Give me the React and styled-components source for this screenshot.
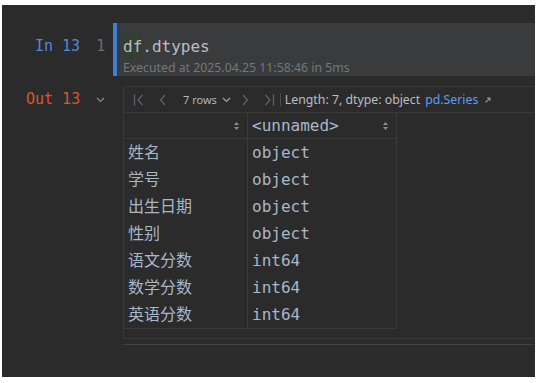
import React from 'react'
import styled, { createGlobalStyle } from 'styled-components'

const mono = `"DejaVu Sans Mono", "Noto Sans CJK SC", monospace`
const sans = `"Noto Sans", "Noto Sans CJK SC", sans-serif`

const rows = [
  ['姓名', 'object'],
  ['学号', 'object'],
  ['出生日期', 'object'],
  ['性别', 'object'],
  ['语文分数', 'int64'],
  ['数学分数', 'int64'],
  ['英语分数', 'int64'],
]

function SortIcon() {
  return (
    <svg width="7" height="10" viewBox="0 0 7 10">
      <path d="M3.5 1 L6 4 L1 4 Z" fill="#8a8d92" />
      <path d="M3.5 9 L6 6 L1 6 Z" fill="#8a8d92" />
    </svg>
  )
}

function NavIcon({ dir, edge }) {
  const flip = dir === 'right' ? 'scale(-1,1) translate(-12,0)' : undefined
  return (
    <svg width="12" height="12" viewBox="0 0 12 12">
      <g transform={flip} stroke="#5f6266" strokeWidth="1.3" fill="none">
        {edge && <path d="M1.5 0.5 V11.5" />}
        <path d={edge ? 'M9.5 1 L5 6 L9.5 11' : 'M8 1 L3.5 6 L8 11'} />
      </g>
    </svg>
  )
}

function Chevron({ color = '#8a8d92' }) {
  return (
    <svg width="9" height="6" viewBox="0 0 9 6">
      <path d="M1 1 L4.5 4.5 L8 1" stroke={color} strokeWidth="1.2" fill="none" />
    </svg>
  )
}

function OpenArrow() {
  return (
    <svg width="8" height="8" viewBox="0 0 8 8">
      <path d="M1.5 6.5 L6 2" stroke="#8a8d92" strokeWidth="1.3" />
      <path d="M2.5 1.5 H6.5 V5.5 Z" fill="#8a8d92" />
    </svg>
  )
}

function App() {
  return (
    <>
      <Global />
      <Page>
        <Frame>
          <CellRow>
            <Gutter>
              <PromptLabel color="#4f8ad9">In 13</PromptLabel>
              <LineNo>1</LineNo>
            </Gutter>
            <CodeBlock>
              <CodeLine>
                <Caret>df</Caret>.dtypes
              </CodeLine>
              <ExecInfo>Executed at 2025.04.25 11:58:46 in 5ms</ExecInfo>
            </CodeBlock>
          </CellRow>

          <OutRow>
            <OutGutter>
              <PromptLabel color="#d9562d">Out 13</PromptLabel>
              <Chevron />
            </OutGutter>
            <div>
              <Panel>
                <Toolbar>
                  <NavIcon edge />
                  <NavSpacer w={12} />
                  <NavIcon />
                  <NavSpacer w={14} />
                  <RowsPicker>
                    7 rows <Chevron color="#a0a3a8" />
                  </RowsPicker>
                  <NavSpacer w={8} />
                  <NavIcon dir="right" />
                  <NavSpacer w={12} />
                  <NavIcon dir="right" edge />
                  <Sep />
                  <Info>Length: 7, dtype: object</Info>
                  <TypeLink>pd.Series</TypeLink>
                  <OpenArrow />
                </Toolbar>
                <Table>
                  <HeadCell>
                    <SortIcon />
                  </HeadCell>
                  <HeadCell second>
                    <span>&lt;unnamed&gt;</span>
                    <SortIcon />
                  </HeadCell>
                  {rows.map(([name, type], i) => (
                    <React.Fragment key={name}>
                      <Cell last={i === rows.length - 1}>{name}</Cell>
                      <Cell second last={i === rows.length - 1}>{type}</Cell>
                    </React.Fragment>
                  ))}
                </Table>
              </Panel>
              <Divider />
            </div>
          </OutRow>
        </Frame>
      </Page>
    </>
  )
}

export default App

const Global = createGlobalStyle`
  body {
    margin: 0;
    background: #ffffff;
  }
`

const Page = styled.div`
  padding: 5px 6px 6px 2px;
`

const Frame = styled.div`
  height: 372px;
  background: #2b2b2b;
  padding-top: 18px;
  box-sizing: border-box;
  overflow: hidden;
`

const CellRow = styled.div`
  display: grid;
  grid-template-columns: 111px 1fr;
`

const Gutter = styled.div`
  display: flex;
  align-items: flex-start;
  padding: 10px 0 0 33px;
`

const PromptLabel = styled.div`
  font-family: ${mono};
  font-size: 15px;
  line-height: 27px;
  color: ${p => p.color};
  white-space: pre;
`

const LineNo = styled.div`
  font-family: ${mono};
  font-size: 15px;
  line-height: 27px;
  color: #6a6d72;
  margin-left: 16px;
`

const CodeBlock = styled.div`
  height: 53px;
  box-sizing: border-box;
  background: #3a3b3d;
  border-left: 4px solid #3d7ed8;
  padding: 10px 0 0 6px;
`

const CodeLine = styled.div`
  font-family: ${mono};
  font-size: 16px;
  line-height: 27px;
  color: #bcbec4;
  white-space: pre;
`

const Caret = styled.span`
  background: #323f31;
  display: inline-block;
`

const ExecInfo = styled.div`
  font-family: ${sans};
  font-size: 12.3px;
  line-height: 16px;
  color: #74777c;
  white-space: nowrap;
`

const OutRow = styled.div`
  display: grid;
  grid-template-columns: 121px 1fr;
  margin-top: 10px;
`

const OutGutter = styled.div`
  display: flex;
  align-items: center;
  gap: 16px;
  height: 27px;
  padding-left: 24px;
`

const Panel = styled.div`
  border: 1px solid #383838;
  border-right: none;
  padding-bottom: 9px;
`

const Toolbar = styled.div`
  display: flex;
  align-items: center;
  height: 25px;
  padding-left: 9px;
  border-bottom: 1px solid #383838;
  font-family: ${sans};
  font-size: 12.3px;
  white-space: nowrap;
`

const NavSpacer = styled.span`
  width: ${p => p.w}px;
`

const RowsPicker = styled.span`
  display: flex;
  align-items: center;
  gap: 5px;
  font-size: 11px;
  color: #b4b7bc;
`

const Sep = styled.span`
  width: 1px;
  height: 13px;
  background: #4a4c50;
  margin: 0 4px 0 5px;
`

const Info = styled.span`
  color: #bcbec4;
`

const TypeLink = styled.span`
  color: #5a9ef5;
  margin: 0 6px 0 5px;
`

const Table = styled.div`
  display: grid;
  grid-template-columns: 123px 150px;
  width: 274px;
`

const HeadCell = styled.div`
  display: flex;
  align-items: center;
  justify-content: ${p => (p.second ? 'space-between' : 'flex-end')};
  height: 26px;
  padding: 0 7px 0 4px;
  box-sizing: border-box;
  border-bottom: 1px solid #3a3a3a;
  border-right: ${p => (p.second ? '1px solid #3a3a3a' : 'none')};
  border-left: ${p => (p.second ? '1px solid #3a3a3a' : 'none')};
  font-family: ${mono};
  font-size: 16px;
  color: #a9b7c6;
`

const Cell = styled.div`
  height: ${p => (p.last ? 28 : 27)}px;
  line-height: 27px;
  box-sizing: border-box;
  padding-left: 4px;
  border-left: ${p => (p.second ? '1px solid #3a3a3a' : 'none')};
  border-right: ${p => (p.second ? '1px solid #3a3a3a' : 'none')};
  border-bottom: ${p => (p.last ? '1px solid #3a3a3a' : 'none')};
  font-family: ${mono};
  font-size: 16px;
  color: #a9b7c6;
  white-space: nowrap;
`

const Divider = styled.div`
  margin-top: 5px;
  border-top: 1px solid #424242;
`
